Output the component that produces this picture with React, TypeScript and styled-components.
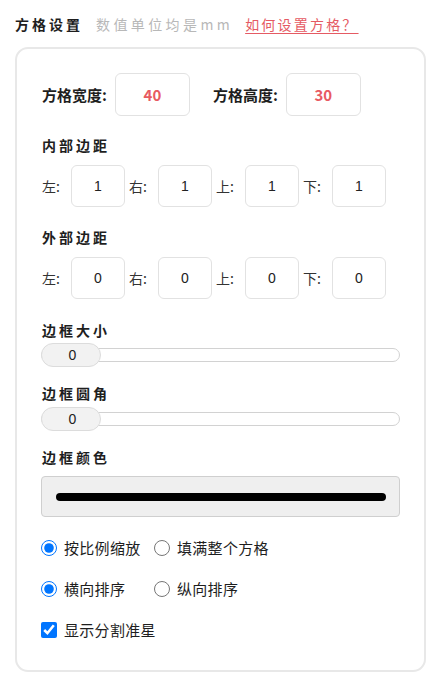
import React from "react";
import styled, { createGlobalStyle } from "styled-components";

const GlobalStyle = createGlobalStyle`
  body {
    margin: 0;
    background: #fff;
    font-family: "Noto Sans CJK SC", "Noto Sans", sans-serif;
    color: #222;
  }
`;

export default function App() {
  const PADDING = ["左", "右", "上", "下"];

  return (
    <>
      <GlobalStyle />
      <Page>
        <Header>
          <HeaderTitle>方格设置</HeaderTitle>
          <HeaderHint>数值单位均是mm</HeaderHint>
          <HeaderLink href="#">如何设置方格？</HeaderLink>
        </Header>

        <Card>
          <SizeRow>
            <SizeLabel>方格宽度:</SizeLabel>
            <SizeInput defaultValue="40" />
            <SizeLabel>方格高度:</SizeLabel>
            <SizeInput defaultValue="30" />
          </SizeRow>

          <SectionTitle $top={19} $bottom={10}>内部边距</SectionTitle>
          <PadRow>
            {PADDING.map((side) => (
              <PadItem key={side}>
                <PadLabel>{side}:</PadLabel>
                <PadInput defaultValue="1" />
              </PadItem>
            ))}
          </PadRow>

          <SectionTitle $top={20} $bottom={10}>外部边距</SectionTitle>
          <PadRow>
            {PADDING.map((side) => (
              <PadItem key={side}>
                <PadLabel>{side}:</PadLabel>
                <PadInput defaultValue="0" />
              </PadItem>
            ))}
          </PadRow>

          <SectionTitle $top={21} $bottom={3}>边框大小</SectionTitle>
          <Slider>
            <Thumb>0</Thumb>
          </Slider>

          <SectionTitle $top={16} $bottom={4}>边框圆角</SectionTitle>
          <Slider>
            <Thumb>0</Thumb>
          </Slider>

          <SectionTitle $top={16} $bottom={9}>边框颜色</SectionTitle>
          <ColorBox>
            <ColorBar />
          </ColorBox>

          <Options>
            <OptionRow>
              <Option>
                <Radio type="radio" name="scale" defaultChecked />
                按比例缩放
              </Option>
              <Option>
                <Radio type="radio" name="scale" />
                填满整个方格
              </Option>
            </OptionRow>
            <OptionRow>
              <Option>
                <Radio type="radio" name="order" defaultChecked />
                横向排序
              </Option>
              <Option>
                <Radio type="radio" name="order" />
                纵向排序
              </Option>
            </OptionRow>
            <OptionRow>
              <Option>
                <Radio type="checkbox" defaultChecked />
                显示分割准星
              </Option>
            </OptionRow>
          </Options>
        </Card>
      </Page>
    </>
  );
}

const Page = styled.div`
  width: 441px;
  padding: 14px 15px 0;
  box-sizing: border-box;
`;

const Header = styled.div`
  display: flex;
  align-items: center;
  height: 20px;
  margin-bottom: 13px;
`;

const HeaderTitle = styled.span`
  font-size: 14px;
  font-weight: 700;
  letter-spacing: 3px;
  color: #1e1e1e;
  margin-right: 13px;
`;

const HeaderHint = styled.span`
  font-size: 14px;
  letter-spacing: 3.4px;
  color: #b8b8b8;
  margin-right: 12px;
`;

const HeaderLink = styled.a`
  font-size: 14px;
  letter-spacing: 2.2px;
  color: #e55a63;
  text-decoration: underline;
  text-underline-offset: 3px;
`;

const Card = styled.div`
  width: 411px;
  box-sizing: border-box;
  border: 2px solid #e8e8e8;
  border-radius: 13px;
  padding: 24px 24px 31px;
`;

const SizeRow = styled.div`
  display: flex;
  align-items: center;
  padding-left: 1px;
`;

const SizeLabel = styled.span`
  font-size: 15px;
  font-weight: 700;
  color: #1e1e1e;
  margin-right: 8px;
`;

const SizeInput = styled.input`
  width: 75px;
  height: 43px;
  box-sizing: border-box;
  border: 1px solid #e2e2e2;
  border-radius: 6px;
  text-align: center;
  font-family: inherit;
  font-size: 15px;
  font-weight: 700;
  color: #e85a62;
  outline: none;
  margin-right: 23px;
`;

const SectionTitle = styled.div<{ $top: number; $bottom: number }>`
  font-size: 14px;
  font-weight: 700;
  letter-spacing: 3px;
  line-height: 20px;
  color: #1e1e1e;
  margin-top: ${(p) => p.$top}px;
  margin-bottom: ${(p) => p.$bottom}px;
  padding-left: 1px;
`;

const PadRow = styled.div`
  display: flex;
  align-items: center;
`;

const PadItem = styled.div`
  display: flex;
  align-items: center;
  margin-right: 3px;
`;

const PadLabel = styled.span`
  flex: 0 0 20px;
  width: 20px;
  margin-left: 1px;
  margin-right: 9px;
  font-size: 14px;
  color: #333;
  white-space: nowrap;
`;

const PadInput = styled.input`
  width: 54px;
  height: 42px;
  box-sizing: border-box;
  border: 1px solid #e2e2e2;
  border-radius: 6px;
  text-align: center;
  font-family: "Liberation Sans", sans-serif;
  font-size: 14px;
  color: #222;
  outline: none;
`;

const Slider = styled.div`
  position: relative;
  width: 359px;
  height: 24px;
  display: flex;
  align-items: center;

  &::before {
    content: "";
    position: absolute;
    left: 0;
    right: 0;
    top: 5px;
    height: 14px;
    box-sizing: border-box;
    border: 1px solid #d2d2d2;
    border-radius: 7px;
    background: #fff;
  }
`;

const Thumb = styled.div`
  position: relative;
  width: 60px;
  height: 24px;
  box-sizing: border-box;
  border: 1px solid #dcdcdc;
  border-radius: 12px;
  background: #f2f2f2;
  display: flex;
  align-items: center;
  justify-content: center;
  padding-left: 3px;
  font-family: "Liberation Sans", sans-serif;
  font-size: 14px;
  color: #222;
`;

const ColorBox = styled.div`
  width: 359px;
  height: 41px;
  box-sizing: border-box;
  border: 1px solid #cfcfcf;
  border-radius: 4px;
  background: #efefef;
  display: flex;
  align-items: center;
  padding: 0 13px 0 14px;
`;

const ColorBar = styled.div`
  flex: 1;
  height: 8px;
  border-radius: 4px;
  background: #000;
`;

const Options = styled.div`
  display: flex;
  flex-direction: column;
  gap: 21px;
  margin-top: 20px;
`;

const OptionRow = styled.div`
  display: grid;
  grid-template-columns: 113px auto;
  height: 20px;
  align-items: center;
`;

const Option = styled.label`
  display: flex;
  align-items: center;
  gap: 7px;
  font-size: 15px;
  letter-spacing: 0.3px;
  color: #1e1e1e;
  white-space: nowrap;
`;

const Radio = styled.input`
  flex-shrink: 0;
  width: 16px;
  height: 16px;
  margin: 0;
  accent-color: #0075ff;
`;
